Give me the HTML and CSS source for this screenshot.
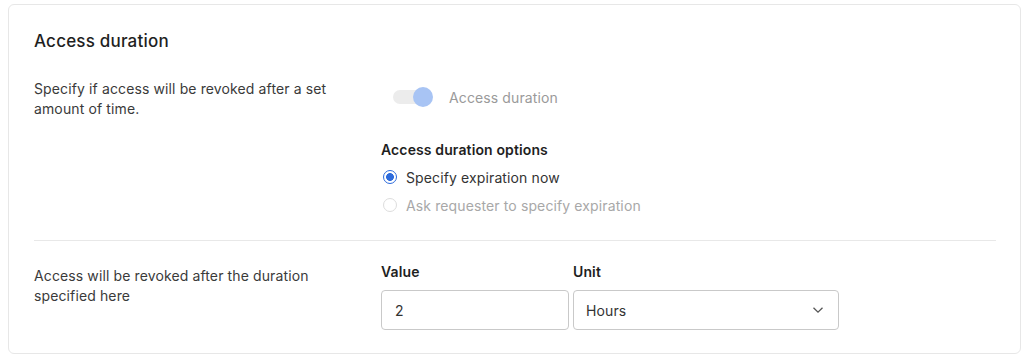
FILE: index.html
```html
<!DOCTYPE html>
<html lang="en">
<head>
    <meta charset="UTF-8">
    <title>Access duration</title>
    <link rel="stylesheet" href="styles.css">
</head>
<body>
    <div class="card">
        <h2>Access duration</h2>

        <!-- Toggle and options -->
        <div class="row">
            <p class="desc">Specify if access will be revoked after a set amount of time.</p>
            <div class="side side-top">
                <div class="toggle-row">
                    <span class="toggle"><span class="knob"></span></span>
                    <span class="toggle-label">Access duration</span>
                </div>
                <div class="options">
                    <h4>Access duration options</h4>
                    <label class="radio checked"><span class="dot"></span>Specify expiration now</label>
                    <label class="radio disabled"><span class="dot"></span>Ask requester to specify expiration</label>
                </div>
            </div>
        </div>

        <hr class="sep">

        <!-- Duration value -->
        <div class="row row-bottom">
            <p class="desc desc-low">Access will be revoked after the duration specified here</p>
            <div class="side fields">
                <div class="field field-value">
                    <h4>Value</h4>
                    <div class="box">2</div>
                </div>
                <div class="field field-unit">
                    <h4>Unit</h4>
                    <div class="box select">
                        <span>Hours</span>
                        <svg width="12" height="8" viewBox="0 0 12 8"><path d="M1.5 1.8 L6 6.2 L10.5 1.8" fill="none" stroke="#555" stroke-width="1.3"/></svg>
                    </div>
                </div>
            </div>
        </div>
    </div>
</body>
</html>
```

FILE: styles.css
```css
/* General Page Styles */
body {
    font-family: 'Inter', 'Liberation Sans', sans-serif;
    background-color: #ffffff;
    color: #333333;
    letter-spacing: 0.12px;
    margin: 0;
    padding: 0;
}

.card {
    margin: 4px 3px 6px 8px;
    border: 1px solid #e7e7e7;
    border-radius: 6px;
    padding: 24px 24px 23px 25px;
}

h2 {
    margin: 0;
    font-size: 17px;
    font-weight: 500;
    line-height: 24px;
    letter-spacing: 0.2px;
    color: #1f1f1f;
}

h4 {
    margin: 0;
    font-size: 14px;
    font-weight: 600;
    line-height: 20px;
    color: #1f1f1f;
}

.row {
    display: grid;
    grid-template-columns: 347px 1fr;
    margin-top: 26px;
}

.row-bottom {
    margin-top: 21px;
}

.desc {
    margin: 0;
    font-size: 14px;
    line-height: 20px;
    color: #3a3a3a;
    width: 300px;
}

.desc-low {
    padding-top: 4px;
}

.side-top {
    padding-top: 8px;
    padding-bottom: 21px;
}

/* Toggle */
.toggle-row {
    display: flex;
    align-items: center;
    height: 20px;
}

.toggle {
    position: relative;
    width: 30px;
    height: 14px;
    margin-left: 12px;
    border-radius: 7px;
    background-color: #ececec;
}

.knob {
    position: absolute;
    right: -10px;
    top: -3px;
    width: 20px;
    height: 20px;
    border-radius: 50%;
    background-color: #a8c4f4;
}

.toggle-label {
    margin-left: 26px;
    font-size: 14px;
    color: #9a9a9a;
    padding-top: 1px;
}

/* Radios */
.options {
    margin-top: 33px;
}

.options h4 {
    margin-bottom: 3px;
}

.radio {
    display: flex;
    align-items: center;
    height: 28px;
    font-size: 14px;
    color: #333333;
}

.radio .dot {
    box-sizing: border-box;
    width: 14px;
    height: 14px;
    margin: 0 9px 0 2px;
    border-radius: 50%;
    border: 1px solid #dddddd;
    background: #ffffff;
}

.radio.checked .dot {
    border: 1.5px solid #2d6bdc;
    background: radial-gradient(circle, #2d6bdc 0 3.6px, #ffffff 4.2px);
}

.radio.disabled {
    color: #a8a8a8;
}

.sep {
    margin: 0;
    border: 0;
    border-top: 1px solid #e8e8e8;
}

/* Value and unit */
.fields {
    display: flex;
    gap: 4px;
}

.field h4 {
    margin-bottom: 8px;
}

.box {
    box-sizing: border-box;
    height: 40px;
    border: 1px solid #c9c9c9;
    border-radius: 4px;
    padding: 0 13px;
    display: flex;
    align-items: center;
    font-size: 14px;
    color: #333333;
}

.field-value .box {
    width: 188px;
}

.field-unit .box {
    width: 266px;
    padding: 0 14px 0 12px;
    justify-content: space-between;
}
```
